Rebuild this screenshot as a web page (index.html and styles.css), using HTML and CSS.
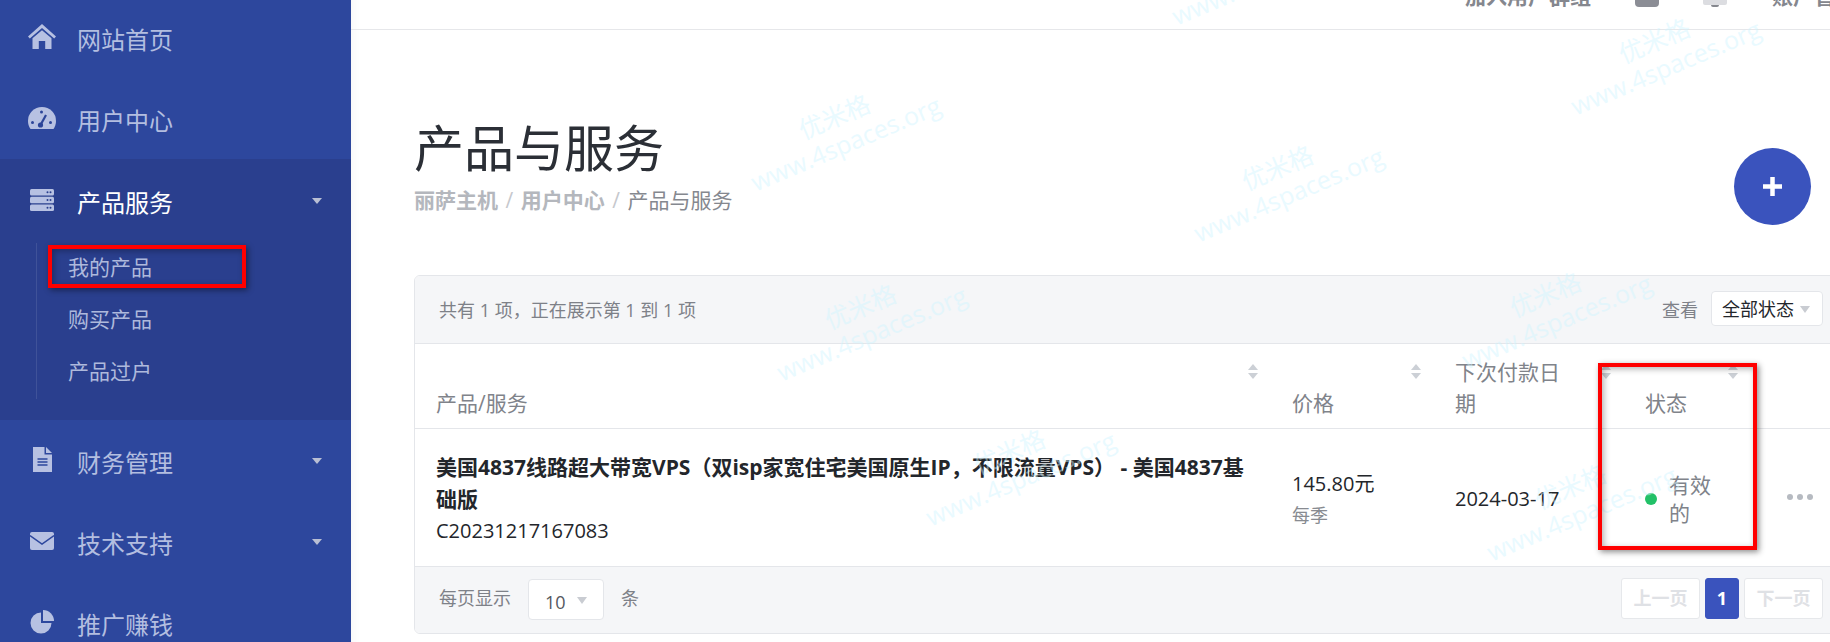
FILE: index.html
```html
<!DOCTYPE html>
<html lang="zh-CN">
<head>
    <meta charset="UTF-8">
    <title>产品与服务</title>
    <link rel="stylesheet" href="styles.css">
</head>
<body>
    <aside class="sidebar">
        <a class="nav-item first">
            <span class="nav-icon"><svg width="28" height="25" viewBox="0 0 28 25"><path d="M14 0L28 12.5 26.2 14.6 14 4 1.8 14.6 0 12.5Z"/><path d="M14 6.2L23.5 14.2V25H17.2V17H10.8V25H4.5V14.2Z"/></svg></span>
            <span>网站首页</span>
        </a>
        <a class="nav-item">
            <span class="nav-icon"><svg width="28" height="22" viewBox="0 0 28 22"><path d="M14 0A14 14 0 0 0 0 14C0 17 .9 19.800 2.500 22H25.500C27.100 19.800 28 17 28 14A14 14 0 0 0 14 0Z"/><g fill="#2c4599"><circle cx="13.500" cy="5" r="1.500"/><circle cx="4.500" cy="15.500" r="1.500"/><circle cx="22.500" cy="15.500" r="1.500"/><circle cx="12.500" cy="18" r="2.600"/></g><path d="M12.500 18L18 8" stroke="#2c4599" stroke-width="2.200"/></svg></span>
            <span>用户中心</span>
        </a>

        <div class="nav-group">
            <a class="nav-item active">
                <span class="nav-icon"><svg width="24" height="22" viewBox="0 0 24 22"><rect width="24" height="6.400" rx="1.500"/><rect y="7.800" width="24" height="6.400" rx="1.500"/><rect y="15.600" width="24" height="6.400" rx="1.500"/><g fill="#2a3f8e"><circle cx="17.500" cy="3.200" r="1"/><circle cx="20.500" cy="3.200" r="1"/><circle cx="17.500" cy="11" r="1"/><circle cx="20.500" cy="11" r="1"/><circle cx="17.500" cy="18.800" r="1"/><circle cx="20.500" cy="18.800" r="1"/></g></svg></span>
                <span>产品服务</span>
                <i class="nav-caret"></i>
            </a>
            <div class="submenu">
                <a>我的产品</a>
                <a>购买产品</a>
                <a>产品过户</a>
            </div>
        </div>

        <a class="nav-item after-group">
            <span class="nav-icon"><svg width="19" height="25" viewBox="0 0 19 25"><path d="M0 0H11.500V7.500H19V25H0Z"/><path d="M13 0L19 6H13Z"/><path d="M4.500 12H14.500M4.500 15H14.500M4.500 18H14.500" stroke="#2d479d" stroke-width="1.300"/></svg></span>
            <span>财务管理</span>
            <i class="nav-caret"></i>
        </a>
        <a class="nav-item">
            <span class="nav-icon"><svg width="24" height="18" viewBox="0 0 24 18"><rect width="24" height="18" rx="2"/><path d="M0 3.500L12 12 24 3.500" fill="none" stroke="#2d479d" stroke-width="1.500"/></svg></span>
            <span>技术支持</span>
            <i class="nav-caret"></i>
        </a>
        <a class="nav-item">
            <span class="nav-icon"><svg width="24" height="24" viewBox="0 0 24 24"><path d="M11 2.500V13H21.500A10.500 10.500 0 1 1 11 2.500Z"/><path d="M13 0A11 11 0 0 1 24 11H13Z"/></svg></span>
            <span>推广赚钱</span>
        </a>
    </aside>

    <main class="main">
        <header class="topbar">
            <span class="topbar-text">加入用户群组</span>
            <i class="top-square"></i>
            <span class="top-bell"><i class="bell-bar"></i><i class="bell-clapper"></i></span>
            <span class="topbar-text">账户管理</span>
        </header>

        <section class="page-head">
            <div>
                <h1>产品与服务</h1>
                <div class="crumbs"><b>丽萨主机</b><em>/</em><b>用户中心</b><em>/</em><span>产品与服务</span></div>
            </div>
            <a class="fab"><svg width="19" height="19" viewBox="0 0 19 19"><path d="M9.500 0V19M0 9.500H19" stroke="#fff" stroke-width="4.500"/></svg></a>
        </section>

        <section class="card">
            <div class="toolbar">
                <span>共有 1 项，正在展示第 1 到 1 项</span>
                <div class="filter">
                    <span>查看</span>
                    <div class="select status-select">全部状态<i class="select-caret"></i></div>
                </div>
            </div>

            <table class="list">
                <colgroup>
                    <col class="c-name"><col class="c-price"><col class="c-date"><col class="c-status"><col>
                </colgroup>
                <thead>
                    <tr>
                        <th>产品/服务<i class="sort"></i></th>
                        <th>价格<i class="sort"></i></th>
                        <th>下次付款日期<i class="sort"></i></th>
                        <th>状态<i class="sort"></i></th>
                        <th></th>
                    </tr>
                </thead>
                <tbody>
                    <tr>
                        <td>
                            <strong>美国4837线路超大带宽VPS（双isp家宽住宅美国原生IP，不限流量VPS） - 美国4837基础版</strong>
                            <div>C20231217167083</div>
                        </td>
                        <td>
                            <div>145.80元</div>
                            <div class="cycle">每季</div>
                        </td>
                        <td>2024-03-17</td>
                        <td>
                            <div class="state"><i class="state-dot"></i><span>有效的</span></div>
                        </td>
                        <td><div class="more"><i></i><i></i><i></i></div></td>
                    </tr>
                </tbody>
            </table>

            <div class="card-foot">
                <div class="per-page">
                    <span>每页显示</span>
                    <div class="select size-select">10<i class="select-caret"></i></div>
                    <span>条</span>
                </div>
                <div class="pager">
                    <a>上一页</a>
                    <a class="current">1</a>
                    <a>下一页</a>
                </div>
            </div>
        </section>
    </main>

    <!-- 水印 -->
    <div class="wm wm-1">优米格<br>www.4spaces.org</div>
    <div class="wm wm-2">优米格<br>www.4spaces.org</div>
    <div class="wm wm-3">优米格<br>www.4spaces.org</div>
    <div class="wm wm-4">优米格<br>www.4spaces.org</div>
    <div class="wm wm-5">优米格<br>www.4spaces.org</div>
    <div class="wm wm-6">优米格<br>www.4spaces.org</div>
    <div class="wm wm-7">优米格<br>www.4spaces.org</div>
    <div class="wm wm-8">优米格<br>www.4spaces.org</div>

    <!-- 截图上的红框 -->
    <div class="mark mark-menu"></div>
    <div class="mark mark-status"></div>
</body>
</html>
```

FILE: styles.css
```css
* {
    margin: 0;
    padding: 0;
    box-sizing: border-box;
}

html,
body {
    height: 642px;
    overflow: hidden;
}

body {
    position: relative;
    display: flex;
    background: #fff;
    font-family: "Open Sans", "Noto Sans CJK SC", sans-serif;
    color: #23262b;
}

i,
em {
    font-style: normal;
}

/* 侧边栏 */
.sidebar {
    width: 351px;
    flex-shrink: 0;
    background: #2d479d;
    color: #b3bee0;
    overflow: hidden;
}

.nav-item {
    display: flex;
    align-items: center;
    height: 81px;
    padding-left: 28px;
    padding-bottom: 3px;
    font-size: 24px;
}

.nav-item.first {
    margin-top: -1px;
}

.nav-item.after-group {
    margin-top: 2px;
}

.nav-item.active {
    color: #fff;
}

.nav-icon {
    display: flex;
    justify-content: center;
    width: 28px;
    margin-right: 21px;
    margin-top: -3px;
}

.nav-icon svg {
    fill: #b7c1e2;
    display: block;
}

.nav-caret {
    margin-left: auto;
    margin-right: 29px;
    margin-top: -1px;
    border-top: 6px solid #b9bfd4;
    border-left: 5px solid transparent;
    border-right: 5px solid transparent;
}

.nav-group {
    margin-top: -2px;
    padding: 3px 0 21px;
    background: #2a3f8e;
}

.submenu {
    margin-left: 36px;
    padding-left: 31px;
    border-left: 1px solid rgba(255, 255, 255, 0.1);
}

.submenu a {
    display: block;
    height: 52px;
    line-height: 49px;
    font-size: 21px;
    color: #aeb9dc;
}

/* 右侧 */
.main {
    flex: 1;
    min-width: 0;
    overflow: hidden;
    box-shadow: inset 12px 0 10px -10px rgba(0, 0, 0, 0.04);
}

.topbar {
    display: flex;
    align-items: flex-end;
    height: 30px;
    padding-left: 1114px;
    border-bottom: 1px solid #e6e7ea;
    overflow: hidden;
}

.topbar > * {
    flex-shrink: 0;
}

.topbar-text {
    margin-bottom: 21px;
    line-height: 24px;
    font-size: 21px;
    font-weight: 700;
    color: #85878e;
    white-space: nowrap;
}

.top-square {
    width: 24px;
    height: 24px;
    margin: 0 44px 22px 44px;
    border-radius: 4px;
    background: #8b8d95;
}

.top-bell {
    position: relative;
    width: 24px;
    height: 20px;
    margin-right: 45px;
    margin-bottom: 22px;
}

.bell-bar {
    display: block;
    height: 18px;
    background: #dcdde1;
    border-radius: 2px;
}

.bell-clapper {
    display: block;
    width: 8px;
    height: 2px;
    margin: 0 auto;
    background: #85878e;
    border-radius: 0 0 4px 4px;
}

.page-head {
    display: flex;
    justify-content: space-between;
    height: 245px;
    padding: 88px 19px 0 63px;
}

h1 {
    font-size: 50px;
    line-height: 60px;
    font-weight: 400;
    color: #2b2f36;
}

.crumbs {
    margin-top: 7px;
    line-height: 30px;
    font-size: 21px;
    color: #85888f;
}

.crumbs b {
    color: #b4b7bd;
}

.crumbs em {
    margin: 0 7.500px;
    color: #c6c8cd;
}

.fab {
    display: flex;
    align-items: center;
    justify-content: center;
    width: 77px;
    height: 77px;
    margin-top: 30px;
    border-radius: 50%;
    background: #3a53bd;
}

.card {
    width: 1436px;
    margin-left: 63px;
    border: 1px solid #e4e6ea;
    border-radius: 6px;
    overflow: hidden;
}

.toolbar {
    display: flex;
    align-items: center;
    justify-content: space-between;
    height: 68px;
    padding: 0 26px 2px 24px;
    background: #f5f6f8;
    border-bottom: 1px solid #e4e6ea;
    font-size: 18px;
    color: #7e8188;
}

.filter {
    display: flex;
    align-items: center;
    gap: 13px;
}

.select {
    position: relative;
    background: #fff;
    border: 1px solid #e4e6ea;
    border-radius: 4px;
    color: #23262b;
}

.status-select {
    width: 112px;
    height: 35px;
    line-height: 34px;
    padding-left: 10px;
    font-size: 18px;
}

.size-select {
    width: 76px;
    height: 41px;
    line-height: 44px;
    padding-left: 16px;
    font-size: 18px;
    color: #55585f;
}

.select-caret {
    position: absolute;
    right: 12px;
    top: 14px;
    border-top: 7px solid #c9ccd2;
    border-left: 5px solid transparent;
    border-right: 5px solid transparent;
}

.size-select .select-caret {
    right: 16px;
    top: 17px;
}

.list {
    width: 100%;
    table-layout: fixed;
    border-collapse: collapse;
    font-size: 20px;
}

.c-name { width: 855px; }
.c-price { width: 163px; }
.c-date { width: 190px; }
.c-status { width: 127px; }

th {
    position: relative;
    height: 84px;
    padding: 0 48px 9px 22px;
    vertical-align: bottom;
    text-align: left;
    font-size: 21px;
    line-height: 31px;
    font-weight: 400;
    color: #80838a;
    border-bottom: 1px solid #e4e6ea;
}

th:first-child,
td:first-child {
    padding-left: 21px;
}

.sort {
    position: absolute;
    top: 20px;
    right: 12px;
    width: 10px;
    height: 15px;
}

.sort::before,
.sort::after {
    content: "";
    position: absolute;
    left: 0;
    border-left: 5px solid transparent;
    border-right: 5px solid transparent;
}

.sort::before {
    top: 0;
    border-bottom: 6px solid #ccd0d6;
}

.sort::after {
    bottom: 0;
    border-top: 6px solid #ccd0d6;
}

td {
    padding: 22px 22px 19px;
    line-height: 32px;
    vertical-align: middle;
    border-bottom: 1px solid #e4e6ea;
}

td strong {
    display: block;
    font-size: 21px;
    font-weight: 700;
}

.cycle {
    font-size: 18px;
    line-height: 30px;
    color: #888b91;
}

.state {
    display: flex;
    align-items: center;
    gap: 12px;
    font-size: 21px;
    line-height: 28px;
    color: #80838a;
}

.state-dot {
    width: 12px;
    height: 12px;
    flex-shrink: 0;
    border-radius: 50%;
    background: #22c168;
}

.state span {
    width: 44px;
}

.more {
    display: flex;
    gap: 4px;
    margin-left: 15px;
    margin-top: -4px;
}

.more i {
    width: 6px;
    height: 6px;
    border-radius: 50%;
    background: #b6bac1;
}

.card-foot {
    display: flex;
    align-items: center;
    justify-content: space-between;
    height: 66px;
    padding: 0 26px 0 24px;
    background: #f5f6f8;
    font-size: 18px;
    color: #7e8188;
}

.per-page {
    display: flex;
    align-items: center;
    gap: 17px;
}

.per-page > span {
    margin-top: -6px;
}

.pager {
    display: flex;
    gap: 5px;
    margin-top: -3px;
}

.pager a {
    width: 79px;
    height: 41px;
    line-height: 39px;
    text-align: center;
    background: #fff;
    border: 1px solid #e6e8eb;
    border-radius: 3px;
    font-weight: 700;
    color: #dfe1e5;
}

.pager a.current {
    width: 34px;
    background: #3a53bd;
    border-color: #3a53bd;
    color: #fff;
}

/* 水印 */
.wm {
    position: absolute;
    width: 240px;
    height: 58px;
    font-size: 25px;
    line-height: 29px;
    text-align: center;
    white-space: nowrap;
    color: #cff5ff;
    opacity: 0.45;
    transform: rotate(-23deg);
    pointer-events: none;
}

.wm-1 { left: 1141px; top: -65px; }
.wm-2 { left: 1540px; top: 25px; }
.wm-3 { left: 720px; top: 101px; }
.wm-4 { left: 1163px; top: 152px; }
.wm-5 { left: 746px; top: 291px; }
.wm-6 { left: 1431px; top: 279px; }
.wm-7 { left: 895px; top: 436px; }
.wm-8 { left: 1456px; top: 471px; }

/* 红框 */
.mark {
    position: absolute;
    border: 4px solid #f00;
    box-shadow: 2px 2px 6px rgba(0, 0, 0, 0.45), inset 2px 2px 6px rgba(0, 0, 0, 0.3);
}

.mark-menu {
    left: 48px;
    top: 245px;
    width: 198px;
    height: 43px;
}

.mark-status {
    left: 1598px;
    top: 363px;
    width: 159px;
    height: 187px;
}
```
